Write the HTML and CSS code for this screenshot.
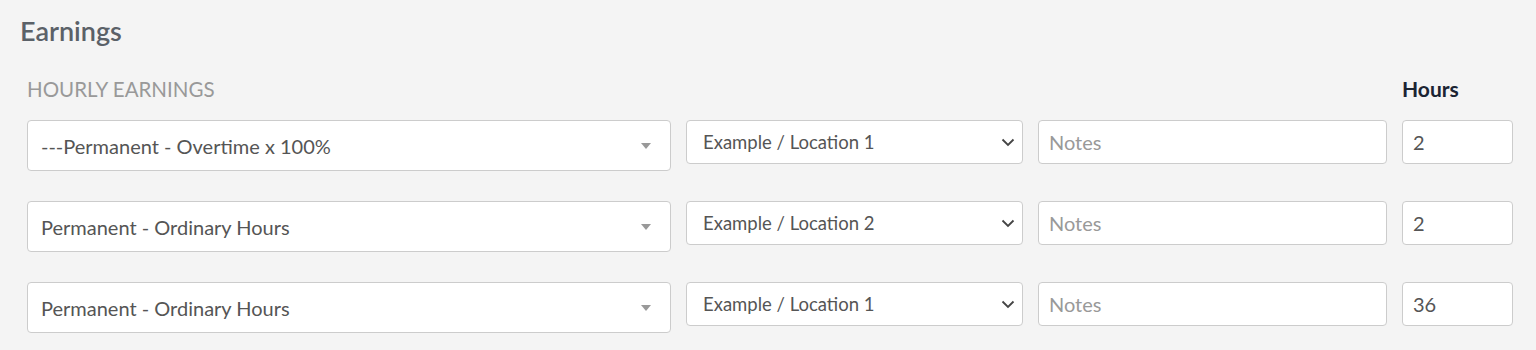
FILE: index.html
```html
<!DOCTYPE html>
<html lang="en">
  <head>
    <meta charset="UTF-8" />
    <meta name="viewport" content="width=device-width, initial-scale=1.0" />
    <title>Earnings</title>
    <link rel="stylesheet" href="styles.css">
  </head>
  <body>
    <section class="earnings">
      <h2 class="title">Earnings</h2>

      <div class="grid head">
        <div class="group-label">HOURLY EARNINGS</div>
        <div></div>
        <div></div>
        <div class="hours-label">Hours</div>
      </div>

      <div class="grid line">
        <div class="combo">
          <span class="combo-text">---Permanent - Overtime x 100%</span>
          <svg class="caret" width="10" height="6" viewBox="0 0 10 6"><path d="M0 0h10L5 6z" fill="#999" /></svg>
        </div>
        <div class="picker">
          <span>Example / Location 1</span>
          <svg class="chevron" width="14" height="9" viewBox="0 0 14 9"><path d="M1.5 1.5l5.5 5.5 5.5-5.5" fill="none" stroke="#444" stroke-width="1.8" /></svg>
        </div>
        <input class="field" type="text" placeholder="Notes" />
        <input class="field" type="text" value="2" />
      </div>

      <div class="grid line">
        <div class="combo">
          <span class="combo-text">Permanent - Ordinary Hours</span>
          <svg class="caret" width="10" height="6" viewBox="0 0 10 6"><path d="M0 0h10L5 6z" fill="#999" /></svg>
        </div>
        <div class="picker">
          <span>Example / Location 2</span>
          <svg class="chevron" width="14" height="9" viewBox="0 0 14 9"><path d="M1.5 1.5l5.5 5.5 5.5-5.5" fill="none" stroke="#444" stroke-width="1.8" /></svg>
        </div>
        <input class="field" type="text" placeholder="Notes" />
        <input class="field" type="text" value="2" />
      </div>

      <div class="grid line">
        <div class="combo">
          <span class="combo-text">Permanent - Ordinary Hours</span>
          <svg class="caret" width="10" height="6" viewBox="0 0 10 6"><path d="M0 0h10L5 6z" fill="#999" /></svg>
        </div>
        <div class="picker">
          <span>Example / Location 1</span>
          <svg class="chevron" width="14" height="9" viewBox="0 0 14 9"><path d="M1.5 1.5l5.5 5.5 5.5-5.5" fill="none" stroke="#444" stroke-width="1.8" /></svg>
        </div>
        <input class="field" type="text" placeholder="Notes" />
        <input class="field" type="text" value="36" />
      </div>
    </section>
  </body>
</html>
```

FILE: styles.css
```css
body {
  margin: 0;
  background-color: #f4f4f4;
  font-family: Lato, "Open Sans", Arial, sans-serif;
  color: #555;
}
.earnings {
  padding: 14px 23px 0 20px;
}
.title {
  margin: 0;
  font-size: 27px;
  line-height: 34px;
  font-weight: 600;
  color: #5b6168;
}
.grid {
  display: grid;
  grid-template-columns: 644px 337px 349px 111px;
  column-gap: 15px;
  padding-left: 7px;
  align-items: start;
}
.head {
  margin-top: 29px;
  margin-bottom: 19px;
  line-height: 24px;
  font-size: 20.5px;
}
.group-label {
  color: #999;
}
.hours-label {
  font-size: 21px;
  font-weight: bold;
  color: #1b2433;
}
.line {
  margin-bottom: 30px;
}
.combo,
.picker,
.field {
  box-sizing: border-box;
  background-color: #fff;
  border: 1px solid #ccc;
  border-radius: 4px;
  font-family: inherit;
}
.combo {
  display: flex;
  align-items: center;
  justify-content: space-between;
  height: 51px;
  padding: 0 19px 0 13px;
  font-size: 20px;
  color: #555;
}
.picker {
  display: flex;
  align-items: center;
  justify-content: space-between;
  height: 44px;
  padding: 0 7px 0 16px;
  font-size: 18.5px;
  color: #555;
}
.field {
  width: 100%;
  height: 44px;
  padding: 0 10px;
  font-size: 20px;
  color: #555;
  outline: none;
}
.field::placeholder {
  color: #999;
}
```
